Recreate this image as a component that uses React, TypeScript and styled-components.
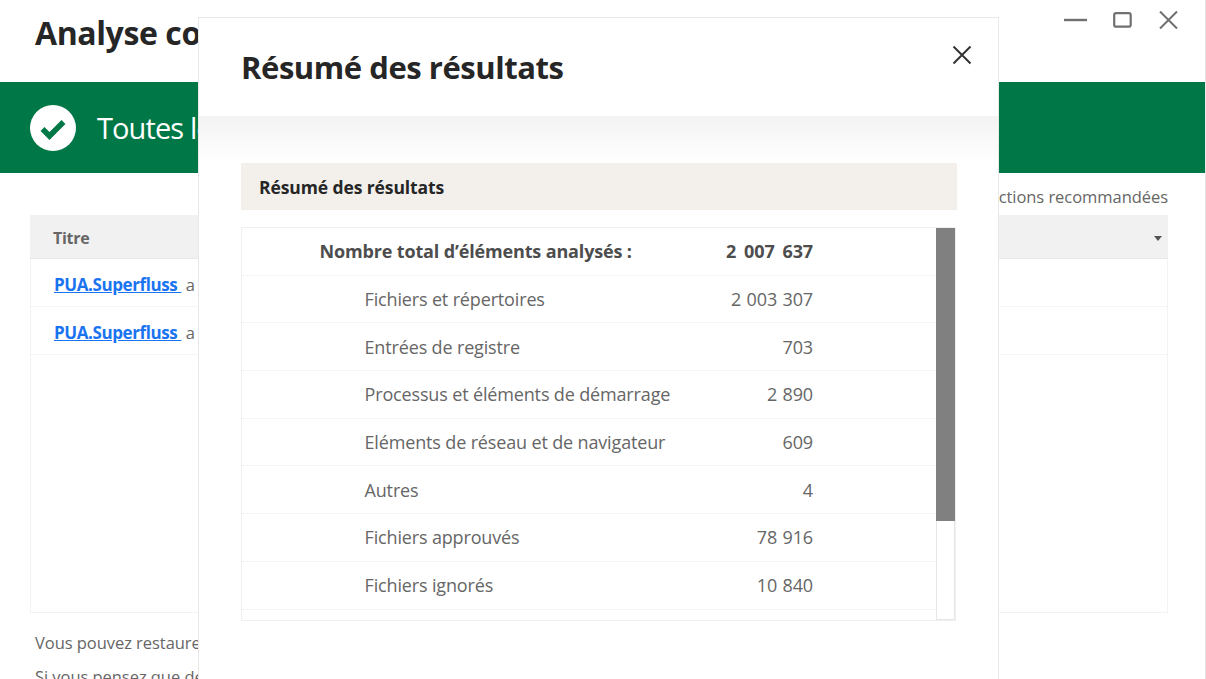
import * as React from 'react'
import styled, { createGlobalStyle } from 'styled-components'

const FONT = `"Open Sans", "Noto Sans", "Liberation Sans", sans-serif`

const rows = [
  { label: 'Fichiers et répertoires', value: '2 003 307' },
  { label: 'Entrées de registre', value: '703' },
  { label: 'Processus et éléments de démarrage', value: '2 890' },
  { label: 'Eléments de réseau et de navigateur', value: '609' },
  { label: 'Autres', value: '4' },
  { label: 'Fichiers approuvés', value: '78 916' },
  { label: 'Fichiers ignorés', value: '10 840' },
]

const GlobalStyle = createGlobalStyle`
  html, body {
    margin: 0;
    height: 100%;
    overflow: hidden;
    background: #fff;
  }
  * {
    box-sizing: border-box;
  }
`

const Page = styled.div`
  position: relative;
  width: 1206px;
  height: 679px;
  overflow: hidden;
  background: #fff;
  font-family: ${FONT};
  color: #666;
  border-right: 1px solid #e6e6e6;
`

const TitleBar = styled.header`
  height: 82px;
  padding: 0 27px 0 35px;
  display: flex;
  align-items: flex-start;
  justify-content: space-between;
`

const PageTitle = styled.h1`
  margin: 11px 0 0;
  font-size: 32px;
  line-height: 44px;
  font-weight: 700;
  color: #262626;
  letter-spacing: -0.4px;
`

const WindowControls = styled.div`
  display: flex;
  gap: 25px;
  padding-top: 9px;
  color: #707070;
`

const Banner = styled.div`
  height: 91px;
  padding-left: 30px;
  background: #007746;
  display: flex;
  align-items: center;
  gap: 21px;
  color: #fff;
  font-size: 29px;
  letter-spacing: -0.9px;
`

const Content = styled.div`
  padding: 0 37px 0 30px;
`

const Actions = styled.div`
  height: 42px;
  display: flex;
  align-items: center;
  justify-content: flex-end;
  font-size: 16.5px;
  letter-spacing: -0.05px;
  padding-top: 5px;
`

const Table = styled.div`
  height: 398px;
  border: 1px solid #f3f3f3;
  border-top: 0;
`

const TableHead = styled.div`
  height: 44px;
  margin: 0 -1px;
  padding: 3px 6px 0 23px;
  background: #f1f1f1;
  border-bottom: 1px solid #e8e8e8;
  display: flex;
  align-items: center;
  justify-content: space-between;
  font-size: 16px;
  font-weight: 700;
  letter-spacing: -0.3px;
`

const Caret = styled.span`
  width: 0;
  height: 0;
  border-left: 4.5px solid transparent;
  border-right: 4.5px solid transparent;
  border-top: 5px solid #555;
`

const ThreatRow = styled.div`
  height: 47.75px;
  padding: 5px 0 0 23px;
  border-bottom: 1px dotted #ececec;
  display: flex;
  align-items: center;
  font-size: 16.5px;
  letter-spacing: -0.05px;
  white-space: pre;
`

const ThreatLink = styled.a`
  color: #1a73f0;
  font-size: 17px;
  font-weight: 700;
  letter-spacing: -0.4px;
  text-decoration: underline;
`

const Note = styled.p`
  margin: 0 0 0 5px;
  font-size: 16.5px;
  line-height: 24px;
  letter-spacing: -0.05px;

  &:first-of-type {
    margin-top: 18px;
  }

  & + & {
    margin-top: 10px;
  }
`

const Modal = styled.section`
  position: absolute;
  left: 198px;
  top: 17px;
  width: 801px;
  height: 680px;
  background: #fff;
  border: 1px solid #e8e8e8;
`

const ModalHead = styled.div`
  height: 98px;
  padding: 0 23px 0 42px;
  display: flex;
  align-items: center;
  justify-content: space-between;
`

const ModalTitle = styled.h2`
  margin: 0;
  font-size: 31px;
  line-height: 44px;
  font-weight: 700;
  color: #262626;
  letter-spacing: -0.45px;
`

const CloseButton = styled.button`
  width: 26px;
  height: 26px;
  padding: 0;
  margin-bottom: 24px;
  border: 0;
  background: none;
  color: #333;
  display: flex;
  align-items: center;
  justify-content: center;
`

const ModalBody = styled.div`
  padding: 47px 41px 0 42px;
  background: linear-gradient(#f3f3f3, #fff 46px);
`

const SectionHead = styled.div`
  height: 47px;
  padding: 1px 0 0 18px;
  background: #f3f0ec;
  display: flex;
  align-items: center;
  font-size: 17.5px;
  font-weight: 700;
  color: #262626;
  letter-spacing: -0.1px;
`

const SummaryBox = styled.div`
  margin-top: 17px;
  width: 715px;
  height: 394px;
  border: 1px solid #f0f0f0;
  display: flex;
`

const SummaryList = styled.div`
  flex: 1;
  min-width: 0;
`

const SummaryRow = styled.div<{ $total?: boolean }>`
  height: 47.7px;
  padding: 0 123px 0 ${p => (p.$total ? '77.5px' : '122.5px')};
  border-bottom: 1px dotted #ededed;
  display: flex;
  align-items: center;
  justify-content: space-between;
  font-size: 18px;
  font-weight: ${p => (p.$total ? 700 : 400)};
  color: ${p => (p.$total ? '#4d4d4d' : '#666')};
  letter-spacing: -0.15px;
`

const SummaryValue = styled.span<{ $total?: boolean }>`
  word-spacing: ${p => (p.$total ? '3.5px' : '1px')};
`

const ScrollTrack = styled.div`
  width: 19px;
  border: 1px solid #e6e6e6;
  background: #fff;
`

const ScrollThumb = styled.div`
  height: 293px;
  margin: -1px;
  background: #808080;
`

const CheckIcon = () => (
  <svg width="46" height="46" viewBox="0 0 46 46">
    <circle cx="23" cy="23" r="23" fill="#fff" />
    <path d="M12.5 24l7 7 14-14" fill="none" stroke="#007746" strokeWidth="5.5" />
  </svg>
)

const App: React.FC = () => {
  return (
    <>
      <GlobalStyle />
      <Page>
        <TitleBar>
          <PageTitle>Analyse complète</PageTitle>
          <WindowControls>
            <svg width="24" height="22" viewBox="0 0 24 22">
              <path d="M0 11h23" stroke="currentColor" strokeWidth="2.4" />
            </svg>
            <svg width="20" height="22" viewBox="0 0 20 22">
              <rect x="1.2" y="4.2" width="16.5" height="13.5" rx="2" fill="none" stroke="currentColor" strokeWidth="2.2" />
            </svg>
            <svg width="20" height="22" viewBox="0 0 20 22">
              <path d="M2 2.5l17 17M19 2.5l-17 17" fill="none" stroke="currentColor" strokeWidth="2" />
            </svg>
          </WindowControls>
        </TitleBar>
        <Banner>
          <CheckIcon />
          Toutes les menaces ont été traitées
        </Banner>
        <Content>
          <Actions>Afficher les actions recommandées</Actions>
          <Table>
            <TableHead>
              Titre
              <Caret />
            </TableHead>
            <ThreatRow>
              <ThreatLink>PUA.Superfluss </ThreatLink> a été traité
            </ThreatRow>
            <ThreatRow>
              <ThreatLink>PUA.Superfluss </ThreatLink> a été traité
            </ThreatRow>
          </Table>
          <Note>Vous pouvez restaurer les éléments depuis la quarantaine.</Note>
          <Note>Si vous pensez que des éléments ont été mal détectés.</Note>
        </Content>
        <Modal>
          <ModalHead>
            <ModalTitle>Résumé des résultats</ModalTitle>
            <CloseButton aria-label="Fermer">
              <svg width="20" height="20" viewBox="0 0 20 20">
                <path d="M1.5 1.5l17 17M18.5 1.5l-17 17" fill="none" stroke="currentColor" strokeWidth="2" />
              </svg>
            </CloseButton>
          </ModalHead>
          <ModalBody>
            <SectionHead>Résumé des résultats</SectionHead>
            <SummaryBox>
              <SummaryList>
                <SummaryRow $total>
                  <span>Nombre total d’éléments analysés :</span>
                  <SummaryValue $total>2 007 637</SummaryValue>
                </SummaryRow>
                {rows.map(({ label, value }) => (
                  <SummaryRow key={label}>
                    <span>{label}</span>
                    <SummaryValue>{value}</SummaryValue>
                  </SummaryRow>
                ))}
              </SummaryList>
              <ScrollTrack>
                <ScrollThumb />
              </ScrollTrack>
            </SummaryBox>
          </ModalBody>
        </Modal>
      </Page>
    </>
  )
}

export default App
